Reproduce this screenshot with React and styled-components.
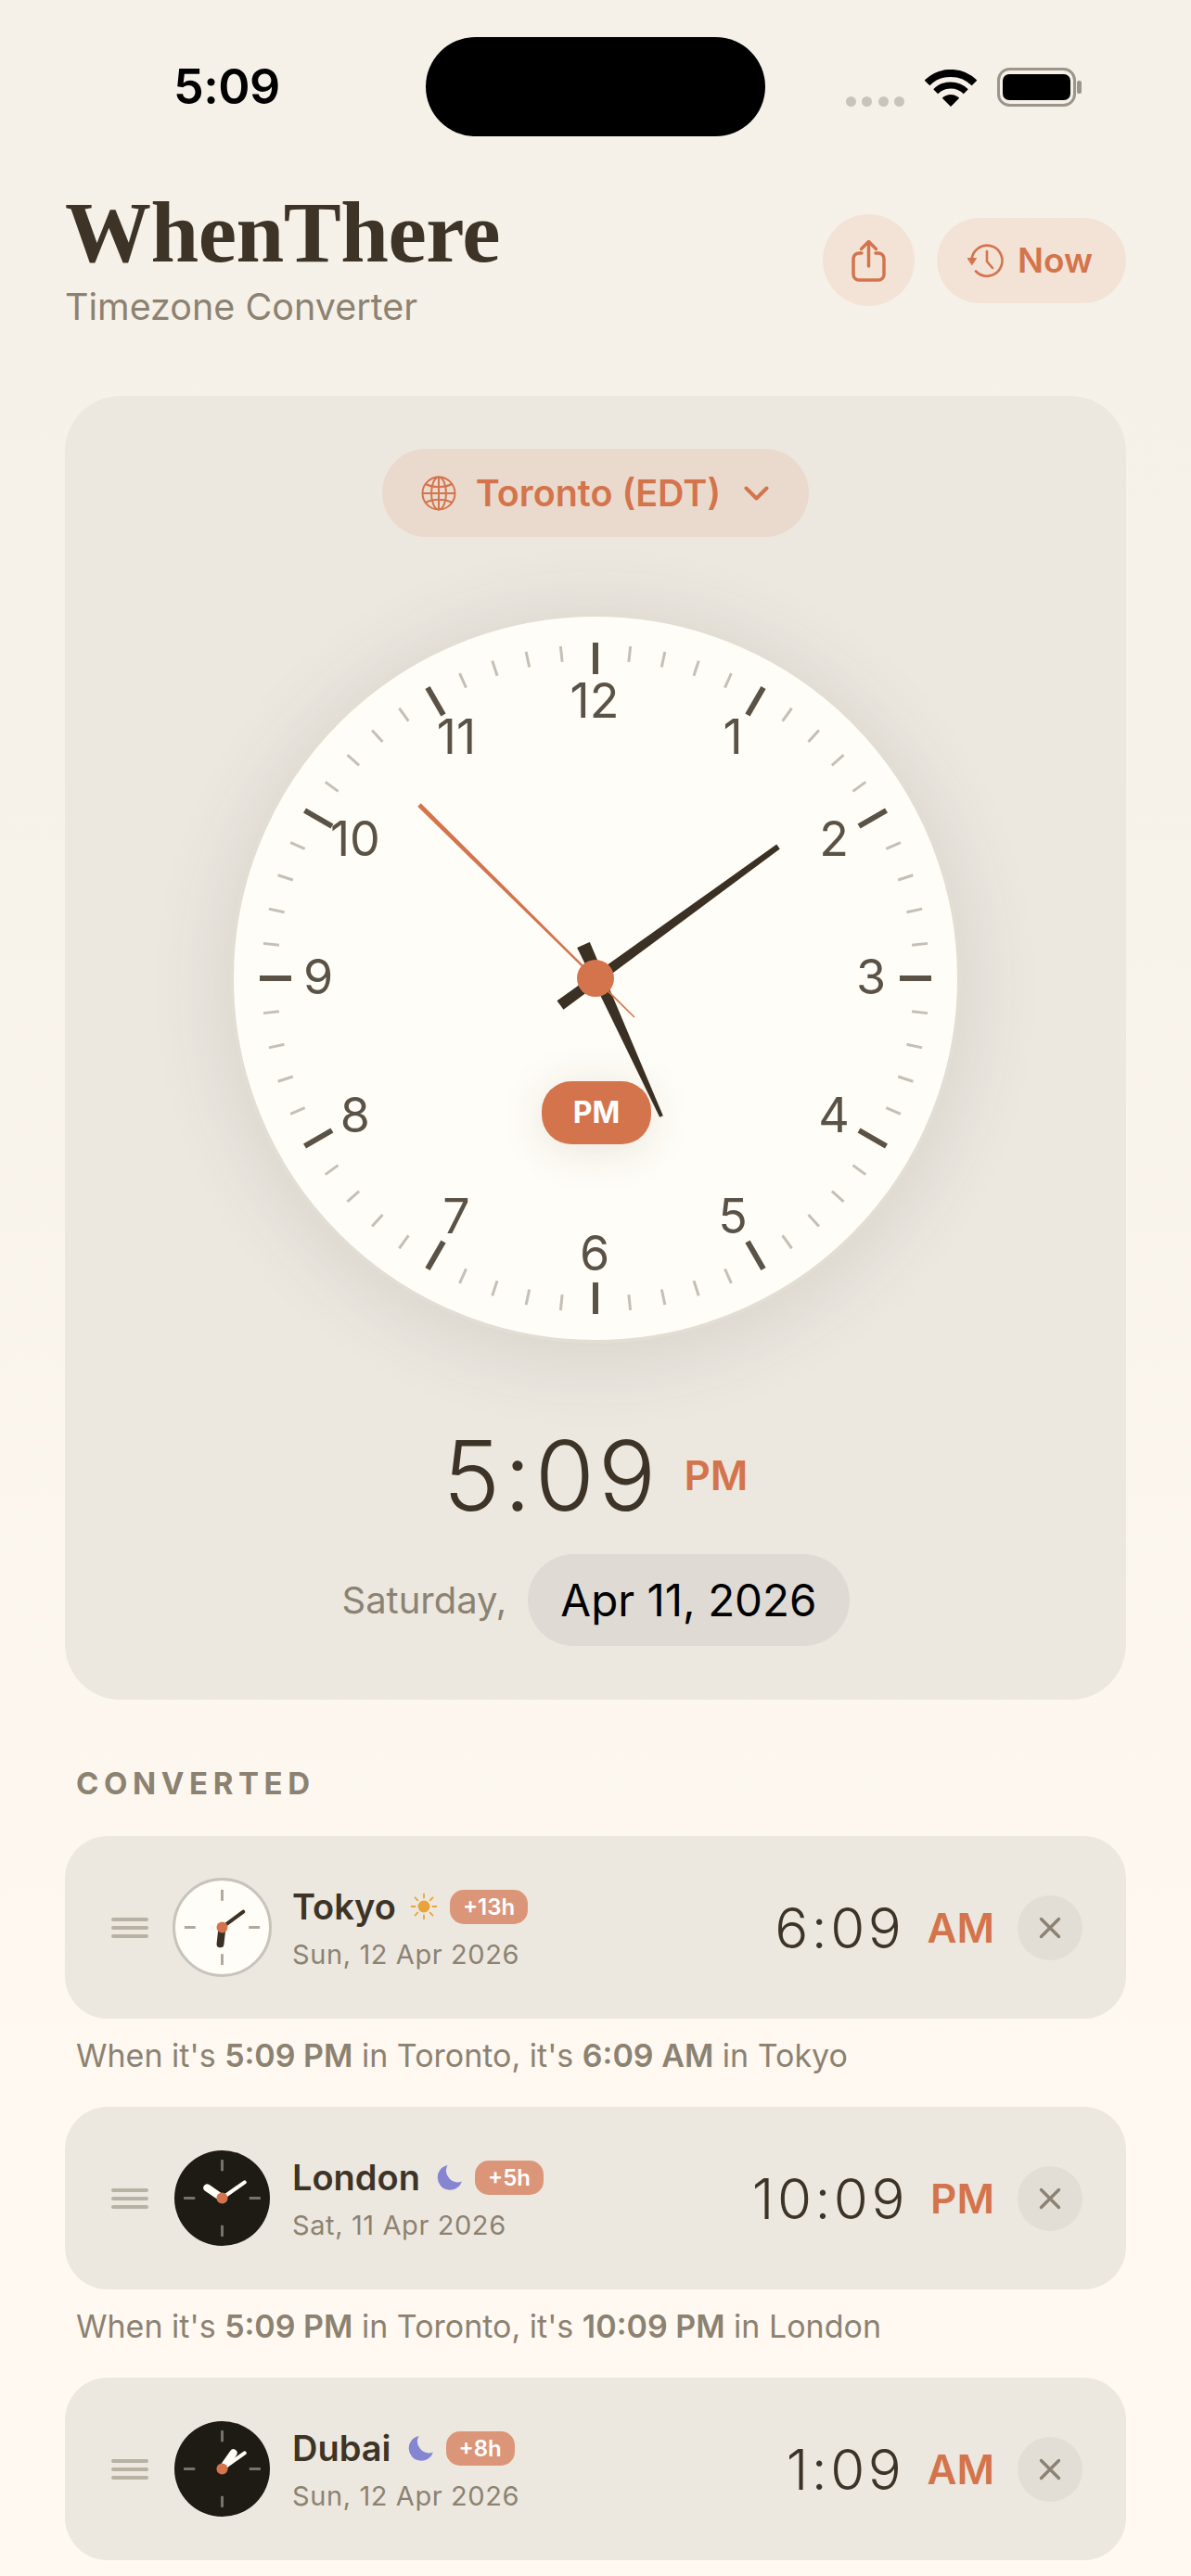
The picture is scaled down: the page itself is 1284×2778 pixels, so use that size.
import React from "react";
import styled, { createGlobalStyle } from "styled-components";

const ACCENT = "#d4744c";
const INK = "#3d3427";
const MUTED = "#8c8272";

const GlobalStyle = createGlobalStyle`
  html, body {
    margin: 0;
    padding: 0;
  }
  body {
    font-family: Inter, "Liberation Sans", sans-serif;
    -webkit-font-smoothing: antialiased;
  }
`;

const Page = styled.div`
  box-sizing: border-box;
  width: 1284px;
  height: 2778px;
  padding: 40px 70px 0;
  overflow: hidden;
  background: linear-gradient(180deg, #f6f1e8 0%, #f7f2e9 30%, #fff9f1 85%);
`;

const StatusBar = styled.div`
  display: grid;
  grid-template-columns: 389px 366px 1fr;
  height: 107px;
  margin: 0 -70px;
  padding-left: 70px;
  padding-right: 117px;
  box-sizing: border-box;
  align-items: center;
`;

const StatusTime = styled.div`
  padding-left: 117px;
  font-size: 52px;
  font-weight: 600;
  line-height: 107px;
  color: #000;
  letter-spacing: -0.5px;
`;

const Island = styled.div`
  height: 107px;
  border-radius: 54px;
  background: #000;
`;

const StatusIcons = styled.div`
  display: flex;
  align-items: flex-end;
  justify-content: flex-end;
  height: 42px;
`;

const SignalDots = styled.div`
  display: flex;
  gap: 6.5px;
  margin-right: 22px;
`;

const SignalDot = styled.span`
  width: 11px;
  height: 11px;
  border-radius: 50%;
  background: #c8c4bc;
`;

const Wifi = styled.svg`
  width: 56px;
  height: 40px;
  margin-right: 22px;
`;

const Header = styled.header`
  display: flex;
  justify-content: space-between;
  align-items: flex-start;
  height: 280px;
`;

const TitleBlock = styled.div`
  padding-top: 62px;
`;

const Title = styled.h1`
  margin: 0;
  font-family: "Liberation Serif", serif;
  font-size: 93px;
  font-weight: 700;
  line-height: 84px;
  letter-spacing: -0.5px;
  color: ${INK};
`;

const Subtitle = styled.div`
  margin-top: 15px;
  font-size: 39.5px;
  line-height: 46px;
  color: ${MUTED};
`;

const Actions = styled.div`
  display: flex;
  align-items: center;
  gap: 24px;
  padding-top: 84px;
`;

const ShareButton = styled.button`
  display: flex;
  align-items: center;
  justify-content: center;
  width: 99px;
  height: 99px;
  padding: 0 0 0 1px;
  border: 0;
  border-radius: 50%;
  background: #f3e3d7;
`;

const NowButton = styled.button`
  display: flex;
  align-items: center;
  gap: 15px;
  height: 92px;
  padding: 0 36px 0 33px;
  border: 0;
  border-radius: 46px;
  background: #f3e3d7;
  font-family: inherit;
  font-size: 37px;
  font-weight: 600;
  color: ${ACCENT};
`;

const MainCard = styled.section`
  display: flex;
  flex-direction: column;
  align-items: center;
  height: 1406px;
  box-sizing: border-box;
  padding-top: 57px;
  border-radius: 60px;
  background: #ece8e0;
`;

const ZonePill = styled.button`
  display: flex;
  align-items: center;
  height: 95px;
  padding: 0 43px 0 42px;
  border: 0;
  border-radius: 48px;
  background: #eadacd;
  font-family: inherit;
  font-size: 39.5px;
  font-weight: 600;
  color: ${ACCENT};
`;

const ZoneName = styled.span`
  margin: 0 25px 0 21px;
`;

const ClockFace = styled.div`
  position: relative;
  box-sizing: border-box;
  width: 788px;
  height: 788px;
  margin-top: 82px;
  border: 4px solid #e3ded3;
  border-radius: 50%;
  background: #fffdf7;
  box-shadow: 0 10px 90px rgba(70, 60, 40, 0.14);
`;

const ClockSvg = styled.svg`
  display: block;
  width: 780px;
  height: 780px;
`;

const ClockNumber = styled.text`
  font-family: Inter, "Liberation Sans", sans-serif;
  font-size: 52px;
  font-weight: 400;
  fill: #5a5246;
  text-anchor: middle;
  dominant-baseline: central;
`;

const MeridiemPill = styled.div`
  position: absolute;
  left: 332px;
  top: 501px;
  width: 118px;
  height: 68px;
  border-radius: 32px;
  background: ${ACCENT};
  box-shadow: 0 6px 50px rgba(60, 50, 30, 0.12);
  font-size: 32px;
  font-weight: 700;
  line-height: 68px;
  text-align: center;
  color: #fff;
`;

const BigTimeRow = styled.div`
  display: flex;
  align-items: center;
  gap: 26px;
  height: 120px;
  margin-top: 82px;
  line-height: 120px;
`;

const BigTime = styled.div`
  font-size: 104px;
  font-weight: 300;
  letter-spacing: 4px;
  color: ${INK};
`;

const BigMeridiem = styled.div`
  font-size: 44px;
  font-weight: 600;
  color: ${ACCENT};
`;

const DateRow = styled.div`
  display: flex;
  align-items: center;
  gap: 23px;
  margin-top: 25px;
`;

const Weekday = styled.div`
  font-size: 40px;
  color: ${MUTED};
`;

const DatePill = styled.div`
  height: 99px;
  padding: 0 35px;
  border-radius: 50px;
  background: #dfdbd4;
  font-size: 47.5px;
  line-height: 99px;
  color: #000;
`;

const SectionLabel = styled.h2`
  margin: 70px 0 37px;
  padding-left: 12px;
  font-size: 33px;
  font-weight: 700;
  line-height: 40px;
  letter-spacing: 5.6px;
  color: ${MUTED};
`;

const CityRow = styled.div`
  display: flex;
  align-items: center;
  height: 197px;
  padding: 0 47px 0 50px;
  box-sizing: border-box;
  border-radius: 46px;
  background: #ece8e0;
`;

const Grip = styled.div`
  display: flex;
  flex-direction: column;
  gap: 5px;
  width: 40px;
  margin-right: 26px;
`;

const GripLine = styled.span`
  height: 4px;
  border-radius: 2px;
  background: #b8b2a5;
`;

const MiniFace = styled.div`
  flex: none;
  box-sizing: border-box;
  width: 107px;
  height: 107px;
  border: ${({ $dark }) => ($dark ? "2px solid transparent" : "3px solid #c8c4ba")};
  border-radius: 50%;
  background: ${({ $dark }) => ($dark ? "#1e1a14" : "#fffdf7")};
  background-clip: padding-box;
  margin-right: 22px;
`;

const MiniSvg = styled.svg`
  display: block;
  width: 100%;
  height: 100%;
`;

const CityInfo = styled.div`
  display: flex;
  flex-direction: column;
  gap: 13px;
  margin-top: 2px;
`;

const CityTitle = styled.div`
  display: flex;
  align-items: center;
  height: 44px;
`;

const CityName = styled.span`
  font-size: 38px;
  font-weight: 600;
  color: ${INK};
`;

const DayIcon = styled.svg`
  width: 28px;
  height: 28px;
  margin: 0 14px 0 16px;
`;

const MoonGlyph = styled(DayIcon)`
  margin: 0 13px 0 18px;
`;

const OffsetBadge = styled.span`
  height: 37px;
  padding: 0 14px;
  border-radius: 15px;
  background: #db9679;
  font-size: 24px;
  font-weight: 600;
  line-height: 37px;
  color: #fff;
`;

const CityDate = styled.div`
  font-size: 29px;
  line-height: 34px;
  letter-spacing: 0.6px;
  color: ${MUTED};
`;

const CityTime = styled.div`
  margin-left: auto;
  font-size: 60px;
  font-weight: 300;
  letter-spacing: 3.5px;
  color: ${INK};
`;

const CityMeridiem = styled.div`
  margin: 0 25px 0 24px;
  font-size: 44px;
  font-weight: 600;
  color: ${ACCENT};
`;

const RemoveButton = styled.button`
  display: flex;
  align-items: center;
  justify-content: center;
  flex: none;
  width: 70px;
  height: 70px;
  padding: 0;
  border: 0;
  border-radius: 50%;
  background: #e2ddd5;
`;

const Note = styled.p`
  margin: 20px 0 35px;
  padding-left: 12px;
  font-size: 34px;
  line-height: 40px;
  color: ${MUTED};

  b {
    font-weight: 600;
  }
`;

const rad = (deg) => (deg * Math.PI) / 180;
const polar = (deg, r) => [Math.sin(rad(deg)) * r, -Math.cos(rad(deg)) * r];

function Tick({ index }) {
  const major = index % 5 === 0;
  const [x1, y1] = polar(index * 6, major ? 362 : 360);
  const [x2, y2] = polar(index * 6, major ? 328 : 343);
  return (
    <line
      x1={x1}
      y1={y1}
      x2={x2}
      y2={y2}
      stroke={major ? "#5a5246" : "#c4c0b6"}
      strokeWidth={major ? 6 : 3}
    />
  );
}

// tapered hand between a tail point and a tip point
function Hand({ tail, tip, tailWidth, tipWidth, color }) {
  const dx = tip[0] - tail[0];
  const dy = tip[1] - tail[1];
  const len = Math.hypot(dx, dy);
  const nx = -dy / len;
  const ny = dx / len;
  const pts = [
    [tail[0] + (nx * tailWidth) / 2, tail[1] + (ny * tailWidth) / 2],
    [tip[0] + (nx * tipWidth) / 2, tip[1] + (ny * tipWidth) / 2],
    [tip[0] - (nx * tipWidth) / 2, tip[1] - (ny * tipWidth) / 2],
    [tail[0] - (nx * tailWidth) / 2, tail[1] - (ny * tailWidth) / 2],
  ];
  return <polygon points={pts.map((p) => p.join(",")).join(" ")} fill={color} />;
}

function AnalogClock() {
  const numbers = [12, 1, 2, 3, 4, 5, 6, 7, 8, 9, 10, 11];
  return (
    <ClockFace>
      <ClockSvg viewBox="-390 -390 780 780">
        {Array.from({ length: 60 }, (_, i) => (
          <Tick key={i} index={i} />
        ))}
        {numbers.map((n, i) => {
          const [x, y] = polar(i * 30, 298);
          return (
            <ClockNumber key={n} x={x - 1} y={y - 2}>
              {n}
            </ClockNumber>
          );
        })}
        <Hand tail={[-38, 29]} tip={[197, -142]} tailWidth={12} tipWidth={6} color="#3a3023" />
        <Hand tail={[-13, -36]} tip={[71, 149]} tailWidth={15} tipWidth={4} color="#3a3023" />
        <Hand tail={[42, 42]} tip={[-190, -187]} tailWidth={1.5} tipWidth={5} color={ACCENT} />
        <circle r="20" fill={ACCENT} />
      </ClockSvg>
      <MeridiemPill>PM</MeridiemPill>
    </ClockFace>
  );
}

function MiniClock({ dark, hour, minute }) {
  const hands = dark ? "#fffdf7" : "#3a3023";
  const ticks = dark ? "#77736b" : "#b0aa9e";
  return (
    <MiniFace $dark={dark}>
      <MiniSvg viewBox="-51 -51 102 102">
        <g stroke={ticks} strokeWidth="3">
          <line x1="0" y1="-41" x2="0" y2="-29" />
          <line x1="0" y1="29" x2="0" y2="41" />
          <line x1="-41" y1="0" x2="-29" y2="0" />
          <line x1="29" y1="0" x2="41" y2="0" />
        </g>
        <line x1="0" y1="0" x2={hour[0]} y2={hour[1]} stroke={hands} strokeWidth="8" strokeLinecap="round" />
        <line x1="0" y1="0" x2={minute[0]} y2={minute[1]} stroke={hands} strokeWidth="4" strokeLinecap="round" />
        <circle r="6" fill={ACCENT} />
      </MiniSvg>
    </MiniFace>
  );
}

function SunIcon() {
  const rays = [0, 45, 90, 135, 180, 225, 270, 315];
  return (
    <DayIcon viewBox="-14 -14 28 28">
      <circle r="6.5" fill="#e9a33a" />
      {rays.map((a) => {
        const [x1, y1] = polar(a, 9.5);
        const [x2, y2] = polar(a, 13.5);
        return <line key={a} x1={x1} y1={y1} x2={x2} y2={y2} stroke="#e9a33a" strokeWidth="1.8" strokeLinecap="round" />;
      })}
    </DayIcon>
  );
}

function MoonIcon() {
  return (
    <MoonGlyph viewBox="0 0 28 28">
      <path d="M11.5 1A13.5 13.5 0 1 0 27 18.5 12.5 12.5 0 0 1 11.5 1Z" fill="#8585d2" />
    </MoonGlyph>
  );
}

function GlobeIcon() {
  return (
    <svg width="38" height="38" viewBox="0 0 38 38" fill="none" stroke={ACCENT} strokeWidth="2">
      <circle cx="19" cy="19" r="17.5" />
      <ellipse cx="19" cy="19" rx="8" ry="17.5" />
      <line x1="19" y1="1.5" x2="19" y2="36.5" />
      <line x1="1.5" y1="19" x2="36.5" y2="19" />
      <path d="M5 9c8 4.2 20 4.2 28 0" />
      <path d="M5 29c8-4.2 20-4.2 28 0" />
    </svg>
  );
}

function Chevron() {
  return (
    <svg width="27" height="16" viewBox="0 0 27 16" fill="none" stroke={ACCENT} strokeWidth="4" strokeLinecap="round" strokeLinejoin="round">
      <path d="M2.5 2.5 13.5 13.5 24.5 2.5" />
    </svg>
  );
}

function ShareIcon() {
  return (
    <svg width="37" height="46" viewBox="0 0 37 46" fill="none" stroke={ACCENT} strokeWidth="3.5" strokeLinecap="round" strokeLinejoin="round">
      <path d="M11 15H8a6 6 0 0 0-6 6v17a6 6 0 0 0 6 6h21a6 6 0 0 0 6-6V21a6 6 0 0 0-6-6h-3" />
      <path d="M18.5 29V3" />
      <path d="M10.5 10.5 18.5 2.5 26.5 10.5" />
    </svg>
  );
}

function HistoryIcon() {
  return (
    <svg width="39" height="36" viewBox="0 0 39 36" fill="none" stroke={ACCENT} strokeWidth="2.6" strokeLinecap="round" strokeLinejoin="round">
      <path d="M4.5 18A16.5 16.5 0 1 1 9 29.5" />
      <path d="M0.5 15.5H9.5L5 22.5Z" fill={ACCENT} strokeWidth="1" />
      <path d="M21 8V19L27 26" />
    </svg>
  );
}

const CITIES = [
  { name: "Tokyo", offset: "+13h", date: "Sun, 12 Apr 2026", time: "6:09", mer: "AM", dark: false, hour: [-2, 18], minute: [23, -17] },
  { name: "London", offset: "+5h", date: "Sat, 11 Apr 2026", time: "10:09", mer: "PM", dark: true, hour: [-16, -11], minute: [24, -17] },
  { name: "Dubai", offset: "+8h", date: "Sun, 12 Apr 2026", time: "1:09", mer: "AM", dark: true, hour: [12, -17], minute: [24, -17] },
];

function City({ city, last }) {
  return (
    <>
      <CityRow>
        <Grip>
          <GripLine />
          <GripLine />
          <GripLine />
        </Grip>
        <MiniClock dark={city.dark} hour={city.hour} minute={city.minute} />
        <CityInfo>
          <CityTitle>
            <CityName>{city.name}</CityName>
            {city.dark ? <MoonIcon /> : <SunIcon />}
            <OffsetBadge>{city.offset}</OffsetBadge>
          </CityTitle>
          <CityDate>{city.date}</CityDate>
        </CityInfo>
        <CityTime>{city.time}</CityTime>
        <CityMeridiem>{city.mer}</CityMeridiem>
        <RemoveButton>
          <svg width="24" height="24" viewBox="0 0 24 24" stroke={MUTED} strokeWidth="3.4" strokeLinecap="round">
            <path d="M2.5 2.5 21.5 21.5M21.5 2.5 2.5 21.5" />
          </svg>
        </RemoveButton>
      </CityRow>
      {!last && (
        <Note>
          When it's <b>5:09 PM</b> in Toronto, it's <b>{city.time} {city.mer}</b> in {city.name}
        </Note>
      )}
    </>
  );
}

export default function App() {
  return (
    <Page>
      <GlobalStyle />
      <StatusBar>
        <StatusTime>5:09</StatusTime>
        <Island />
        <StatusIcons>
          <SignalDots>
            <SignalDot />
            <SignalDot />
            <SignalDot />
            <SignalDot />
          </SignalDots>
          <Wifi viewBox="0 0 56 40" fill="none" stroke="#000">
            <path d="M2.5 14.5A36 36 0 0 1 53.5 14.5" strokeWidth="8" />
            <path d="M11.7 23.7A23 23 0 0 1 44.3 23.7" strokeWidth="7" />
            <path d="M28 40 18.8 30.8A13 13 0 0 1 37.2 30.8Z" fill="#000" stroke="none" />
          </Wifi>
          <svg width="92" height="42" viewBox="0 0 92 42">
            <rect x="1.5" y="1.5" width="82" height="39" rx="12" fill="none" stroke="#9a968c" strokeWidth="3" />
            <rect x="6" y="7" width="73" height="28" rx="7" fill="#000" />
            <rect x="86" y="14" width="5" height="14" rx="2" fill="#9a968c" />
          </svg>
        </StatusIcons>
      </StatusBar>
      <Header>
        <TitleBlock>
          <Title>WhenThere</Title>
          <Subtitle>Timezone Converter</Subtitle>
        </TitleBlock>
        <Actions>
          <ShareButton>
            <ShareIcon />
          </ShareButton>
          <NowButton>
            <HistoryIcon />
            Now
          </NowButton>
        </Actions>
      </Header>
      <MainCard>
        <ZonePill>
          <GlobeIcon />
          <ZoneName>Toronto (EDT)</ZoneName>
          <Chevron />
        </ZonePill>
        <AnalogClock />
        <BigTimeRow>
          <BigTime>5:09</BigTime>
          <BigMeridiem>PM</BigMeridiem>
        </BigTimeRow>
        <DateRow>
          <Weekday>Saturday,</Weekday>
          <DatePill>Apr 11, 2026</DatePill>
        </DateRow>
      </MainCard>
      <SectionLabel>CONVERTED</SectionLabel>
      {CITIES.map((city, i) => (
        <City key={city.name} city={city} last={i === CITIES.length - 1} />
      ))}
    </Page>
  );
}
